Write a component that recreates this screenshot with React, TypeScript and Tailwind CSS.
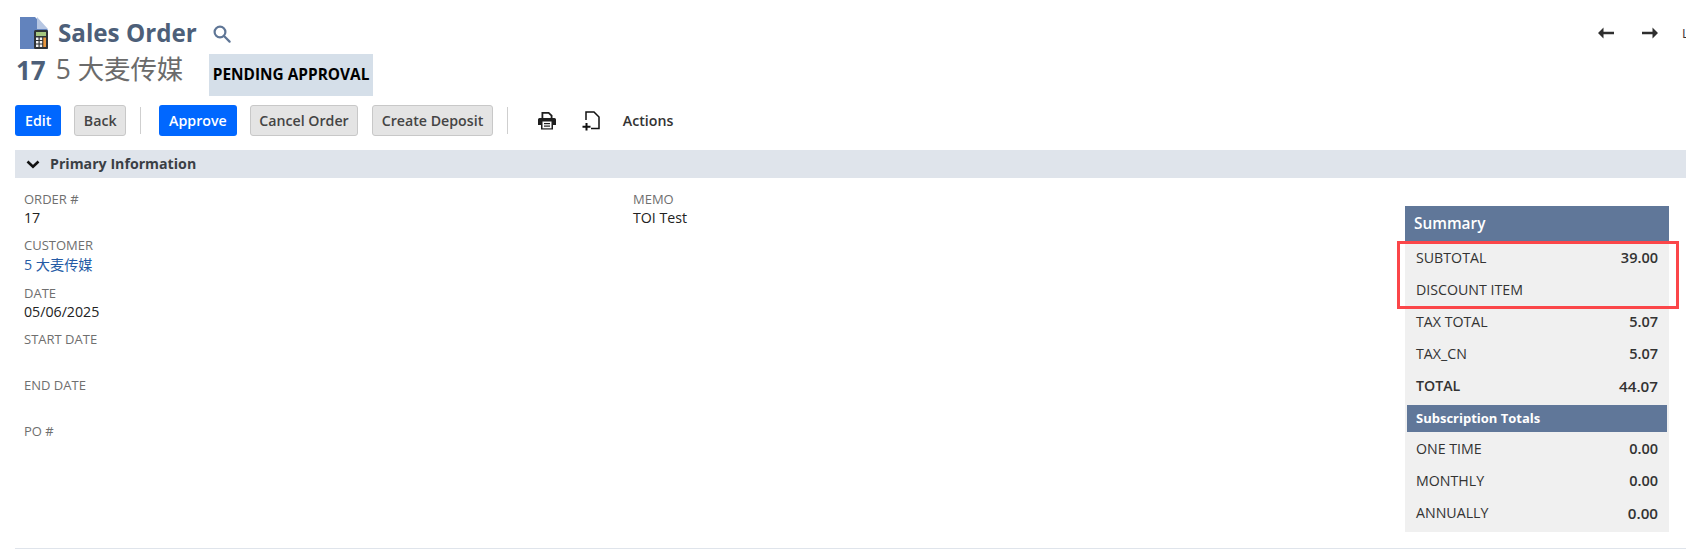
const font = "font-['Open_Sans','Noto_Sans_CJK_SC',sans-serif]"

function FileCalcIcon() {
  return (
    <svg width="30" height="32" viewBox="0 0 30 32" className="shrink-0">
      <path d="M0 0h15l13 13v19H0z" fill="#6283bd" />
      <path d="M17 0l11 12H17z" fill="#b6c6e2" />
      <rect x="14" y="13" width="14" height="19" rx="1.5" fill="#2f3336" />
      <rect x="16" y="15" width="10" height="4" fill="#a5c77f" />
      <g fill="#f2f2f2">
        <rect x="16" y="20.5" width="2.5" height="2.5" />
        <rect x="19.7" y="20.5" width="2.5" height="2.5" />
        <rect x="16" y="24" width="2.5" height="2.5" />
        <rect x="19.7" y="24" width="2.5" height="2.5" />
        <rect x="16" y="27.5" width="2.5" height="2.5" />
        <rect x="19.7" y="27.5" width="2.5" height="2.5" />
      </g>
      <rect x="23.3" y="20.5" width="2.7" height="9.5" fill="#e8963c" />
    </svg>
  )
}

function SearchIcon() {
  return (
    <svg width="18" height="18" viewBox="0 0 18 18" fill="none" stroke="#5f7696" strokeWidth="2.2" className="shrink-0">
      <circle cx="7" cy="7" r="5.4" />
      <path d="M11 11l5.6 5.6" strokeLinecap="round" />
    </svg>
  )
}

function PrinterIcon() {
  return (
    <svg width="18" height="19" viewBox="0 0 18 19" className="shrink-0">
      <path d="M3.500 8V1h7.500l3.500 3.200V8h-1.800V5L10.300 2.800H5.300V8z" fill="#1f1f1f" />
      <path d="M1.500 7h15A1.500 1.500 0 0 1 18 8.500V14h-3v4.500H3V14H0V8.500A1.500 1.500 0 0 1 1.500 7z" fill="#1f1f1f" />
      <rect x="4.500" y="10.500" width="9" height="6.800" fill="#fff" />
      <rect x="6" y="12" width="6" height="1.200" fill="#1f1f1f" />
      <rect x="6" y="14.500" width="6" height="1.200" fill="#1f1f1f" />
    </svg>
  )
}

function AddFileIcon() {
  return (
    <svg width="18" height="20" viewBox="0 0 18 20" fill="none" stroke="#111" strokeWidth="1.500" className="shrink-0">
      <path d="M4 9V1h8l5 5v11.500H9" />
      <path d="M4.500 12v7.500M0.500 15.800h8" strokeWidth="2" />
    </svg>
  )
}

function ArrowIcon({ right }: { right?: boolean }) {
  return (
    <svg width="16" height="12" viewBox="0 0 16 12" className={right ? 'rotate-180' : ''}>
      <path d="M0 6l5.500-5.500V4.800H16v2.400H5.500v4.300z" fill="#2e2e2e" />
    </svg>
  )
}

function Field({ label, value, link }: { label: string; value?: string; link?: boolean }) {
  return (
    <div className="mb-[28px] last:mb-0">
      <div className="h-[18px] text-[13px] leading-[18px] text-[#6f6f6f]">{label}</div>
      {value && (
        <div className={`-mb-[20px] text-[14.2px] leading-[20px] ${link ? 'pt-[1px] text-[#255ba5]' : 'text-[#222]'}`}>{value}</div>
      )}
    </div>
  )
}

function SummaryRow({ label, value, strong, big }: { label: string; value?: string; strong?: boolean; big?: boolean }) {
  return (
    <div className="flex h-[32px] items-center justify-between px-[11px] text-[#333]">
      <span className={`text-[14.2px] ${strong ? 'font-semibold' : ''}`}>{label}</span>
      <span className={`${big ? 'text-[15.2px]' : 'text-[14.5px]'} font-semibold`}>{value}</span>
    </div>
  )
}

function Button({ children, primary }: { children: string; primary?: boolean }) {
  return (
    <button
      className={
        primary
          ? 'h-[31px] rounded-[3px] bg-[#0067ff] px-[10px] text-[14.2px] font-semibold text-white'
          : 'h-[31px] rounded-[3px] border border-[#c8c8c8] bg-[#e4e4e4] px-[8.500px] text-[14.2px] font-semibold text-[#444]'
      }
    >
      {children}
    </button>
  )
}

export default function App() {
  return (
    <div className={`${font} relative h-[549px] w-[1686px] overflow-hidden bg-white`}>
      <div className="flex h-[54px] items-start justify-between pt-[17px]">
        <div className="flex items-center pl-[20px]">
          <FileCalcIcon />
          <h1 className="ml-[8px] text-[24.2px] leading-[30px] font-bold text-[#4d5f79]">Sales Order</h1>
          <div className="ml-[16px] mt-[2px]">
            <SearchIcon />
          </div>
        </div>
        <div className="flex items-center gap-[28px] pt-[9px]">
          <ArrowIcon />
          <ArrowIcon right />
          <span className="-ml-[4px] w-[4px] overflow-hidden text-[13px] leading-[14px] text-[#333]">L</span>
        </div>
      </div>

      <div className="flex h-[42px] items-center pl-[16px]">
        <span className="mb-[10px] text-[26px] font-bold text-[#4d5f79]">17</span>
        <span className="mb-[10px] ml-[10px] text-[26.4px] text-[#6b6b6b]">5 大麦传媒</span>
        <span className="ml-[26px] flex h-[42px] items-center bg-[#d5dfe9] px-[3.500px] text-[15.4px] font-bold text-black">
          PENDING APPROVAL
        </span>
      </div>

      <div className="ml-[15px] mt-[9px] flex h-[31px] items-center">
        <Button primary>Edit</Button>
        <div className="ml-[13px]">
          <Button>Back</Button>
        </div>
        <div className="ml-[14px] h-[27px] w-px bg-[#cfcfcf]" />
        <div className="ml-[18px]">
          <Button primary>Approve</Button>
        </div>
        <div className="ml-[13px]">
          <Button>Cancel Order</Button>
        </div>
        <div className="ml-[14px]">
          <Button>Create Deposit</Button>
        </div>
        <div className="ml-[14px] h-[27px] w-px bg-[#cfcfcf]" />
        <div className="ml-[30px]">
          <PrinterIcon />
        </div>
        <div className="ml-[26px]">
          <AddFileIcon />
        </div>
        <span className="ml-[23px] text-[14.2px] font-semibold text-[#333]">Actions</span>
      </div>

      <div className="ml-[15px] mt-[14px] flex h-[28px] items-center bg-[#dfe4eb] pl-[11px]">
        <svg width="14" height="9" viewBox="0 0 14 9" fill="none" stroke="#111" strokeWidth="2.600">
          <path d="M1.500 1.500L7 6.800l5.500-5.300" />
        </svg>
        <span className="ml-[10px] text-[14.2px] font-bold text-[#3a3f45]">Primary Information</span>
      </div>

      <div className="flex">
        <div className="flex w-[633px] flex-col pl-[24px] pt-[12px]">
          <Field label="ORDER #" value="17" />
          <Field label="CUSTOMER" value="5 大麦传媒" link />
          <div className="h-[1px]" />
          <Field label="DATE" value="05/06/2025" />
          <Field label="START DATE" />
          <Field label="END DATE" />
          <Field label="PO #" />
        </div>
        <div className="w-[772px] pt-[12px]">
          <Field label="MEMO" value="TOI Test" />
        </div>
        <aside className="relative mt-[28px] h-[326px] w-[264px] bg-[#f0f0f0]">
          <div className="mb-[1px] flex h-[35px] items-center bg-[#607799] pl-[9px] text-[15.4px] font-semibold text-white">Summary</div>
          <SummaryRow label="SUBTOTAL" value="39.00" />
          <SummaryRow label="DISCOUNT ITEM" />
          <SummaryRow label="TAX TOTAL" value="5.07" />
          <SummaryRow label="TAX_CN" value="5.07" />
          <SummaryRow label="TOTAL" value="44.07" strong big />
          <div className="mx-[2px] mb-[1px] mt-[3px] flex h-[27px] items-center bg-[#607799] pl-[9px] text-[13px] font-bold text-white">
            Subscription Totals
          </div>
          <SummaryRow label="ONE TIME" value="0.00" />
          <SummaryRow label="MONTHLY" value="0.00" />
          <SummaryRow label="ANNUALLY" value="0.00" big />
          <div className="absolute left-[-8px] top-[35px] h-[68px] w-[282px] border-[3px] border-[#fb4649]" />
        </aside>
      </div>

      <div className="absolute bottom-0 left-[15px] right-0 h-px bg-[#dfe4eb]" />
    </div>
  )
}
